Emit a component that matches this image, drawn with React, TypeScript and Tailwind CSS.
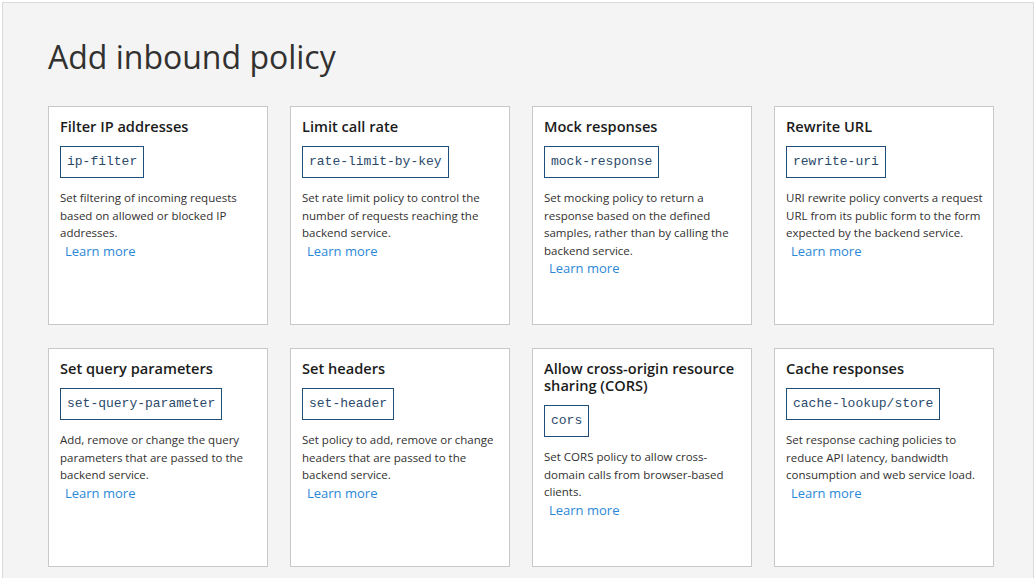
import React from 'react';

interface Policy {
  title: string;
  code: string;
  description: string;
}

const policies: Policy[] = [
  {
    title: 'Filter IP addresses',
    code: 'ip-filter',
    description: 'Set filtering of incoming requests based on allowed or blocked IP addresses.',
  },
  {
    title: 'Limit call rate',
    code: 'rate-limit-by-key',
    description: 'Set rate limit policy to control the number of requests reaching the backend service.',
  },
  {
    title: 'Mock responses',
    code: 'mock-response',
    description: 'Set mocking policy to return a response based on the defined samples, rather than by calling the backend service.',
  },
  {
    title: 'Rewrite URL',
    code: 'rewrite-uri',
    description: 'URI rewrite policy converts a request URL from its public form to the form expected by the backend service.',
  },
  {
    title: 'Set query parameters',
    code: 'set-query-parameter',
    description: 'Add, remove or change the query parameters that are passed to the backend service.',
  },
  {
    title: 'Set headers',
    code: 'set-header',
    description: 'Set policy to add, remove or change headers that are passed to the backend service.',
  },
  {
    title: 'Allow cross-origin resource sharing (CORS)',
    code: 'cors',
    description: 'Set CORS policy to allow cross-domain calls from browser-based clients.',
  },
  {
    title: 'Cache responses',
    code: 'cache-lookup/store',
    description: 'Set response caching policies to reduce API latency, bandwidth consumption and web service load.',
  },
];

function PolicyCard({ policy }: { policy: Policy }) {
  return (
    <div className="h-[219px] bg-white border border-[#c8c8c8] pl-[11px] pr-[5px] pt-[11px]">
      <h3 className="pr-[6px] text-[14.6px] leading-[17px] font-semibold text-[#1b1b1b]">{policy.title}</h3>
      <div className="mt-[11px] flex">
        <span className="h-[32px] flex items-center border border-[#1f4e7a] px-[6px] font-['Liberation_Mono',monospace] text-[13px] text-[#2b4a6b]">
          {policy.code}
        </span>
      </div>
      <p className="mt-[11px] text-[11.5px] leading-[17.5px] text-[#323130]">{policy.description}</p>
      <a href="#" className="block pl-[5px] text-[13px] leading-[19px] text-[#2b88d8]">
        Learn more
      </a>
    </div>
  );
}

export default function App() {
  return (
    <div className="min-h-[578px] bg-white pt-[2px] pl-[2px] font-['Open_Sans',sans-serif]">
      <div className="w-[1032px] min-h-[576px] bg-[#f4f4f4] border-t border-l border-r border-[#dadada] pl-[45px] pt-[32px]">
        <h1 className="text-[32px] leading-[44px] text-[#323130]">Add inbound policy</h1>
        <div className="mt-[27px] grid grid-cols-[220px_220px_220px_220px] gap-x-[22px] gap-y-[23px]">
          {policies.map((p) => (
            <PolicyCard key={p.code} policy={p} />
          ))}
        </div>
      </div>
    </div>
  );
}
